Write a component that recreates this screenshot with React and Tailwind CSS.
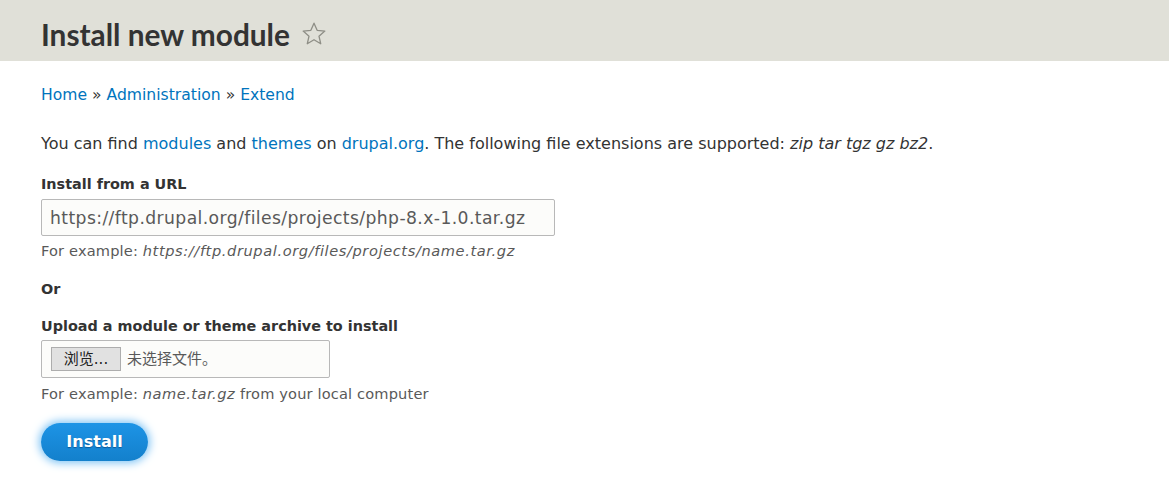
const font = { fontFamily: '"DejaVu Sans", "Noto Sans CJK SC", sans-serif' }

const Star = () => (
  <svg width="26" height="26" viewBox="0 0 24 24" className="ml-[11px] mt-[6px]">
    <path
      d="M12 2l2.9 6.6 7.1.7-5.4 4.7 1.6 7L12 17.3 5.8 21l1.6-7L2 9.3l7.1-.7z"
      fill="none"
      stroke="#8e8e86"
      strokeWidth="1.2"
      strokeLinejoin="round"
    />
  </svg>
)

const A = ({ children }) => <a href="#" className="text-[#0074bd]">{children}</a>

export default function App() {
  return (
    <div className="w-[1169px] h-[501px] bg-white text-[#333]" style={font}>
      <div className="h-[61px] bg-[#e0e0d8] px-[41px] flex items-center">
        <h1
          className="text-[29.8px] font-bold text-[#333] leading-none mt-[8px]"
          style={{ fontFamily: 'Lato, "DejaVu Sans", sans-serif' }}
        >
          Install new module
        </h1>
        <Star />
      </div>
      <div className="px-[41px]">
        <nav className="mt-[24px] text-[15.6px] leading-5 text-[#0074bd]">
          <A>Home</A> <span className="text-[#333]">»</span> <A>Administration</A>{' '}
          <span className="text-[#333]">»</span> <A>Extend</A>
        </nav>
        <p className="mt-[29px] text-[16px] leading-5">
          You can find <A>modules</A> and <A>themes</A> on <A>drupal.org</A>. The following file
          extensions are supported: <em>zip tar tgz gz bz2</em>.
        </p>
        <label className="block mt-[20px] text-[14.4px] font-bold leading-5">Install from a URL</label>
        <input
          readOnly
          value="https://ftp.drupal.org/files/projects/php-8.x-1.0.tar.gz"
          className="mt-[5px] block w-[514px] h-[37px] px-[8px] border border-[#b8b8b8] rounded-[2px] bg-[#fcfcfa] text-[17.2px] tracking-[0.4px] text-[#595959] outline-none"
          style={font}
        />
        <p className="mt-[5px] text-[14.6px] leading-5 tracking-[0.15px] text-[#595959]">
          For example: <em className="tracking-[0.6px]">https://ftp.drupal.org/files/projects/name.tar.gz</em>
        </p>
        <p className="mt-[18px] text-[14.4px] font-bold leading-5">Or</p>
        <label className="block mt-[17px] text-[14.4px] font-bold leading-5">
          Upload a module or theme archive to install
        </label>
        <div className="mt-[4px] w-[289px] h-[38px] border border-[#b8b8b8] rounded-[2px] bg-[#fcfcfa] flex items-center px-[9px] gap-[6px]">
          <span className="h-[24px] w-[70px] border border-[#adadad] bg-[#e1e1e1] text-[15px] text-[#222] flex items-center justify-center">
            浏览...
          </span>
          <span className="text-[15px] text-[#595959]">未选择文件。</span>
        </div>
        <p className="mt-[6px] text-[14.6px] leading-5 tracking-[0.15px] text-[#595959]">
          For example: <em className="tracking-[0.5px]">name.tar.gz</em> from your local computer
        </p>
        <button className="mt-[19px] w-[107px] h-[38px] rounded-full bg-gradient-to-b from-[#1d94e6] to-[#1380cc] text-white text-[16px] font-bold shadow-[0_0_8px_2px_#7fc4f5] [text-shadow:0_1px_1px_#0b5a9a]">
          Install
        </button>
      </div>
    </div>
  )
}
